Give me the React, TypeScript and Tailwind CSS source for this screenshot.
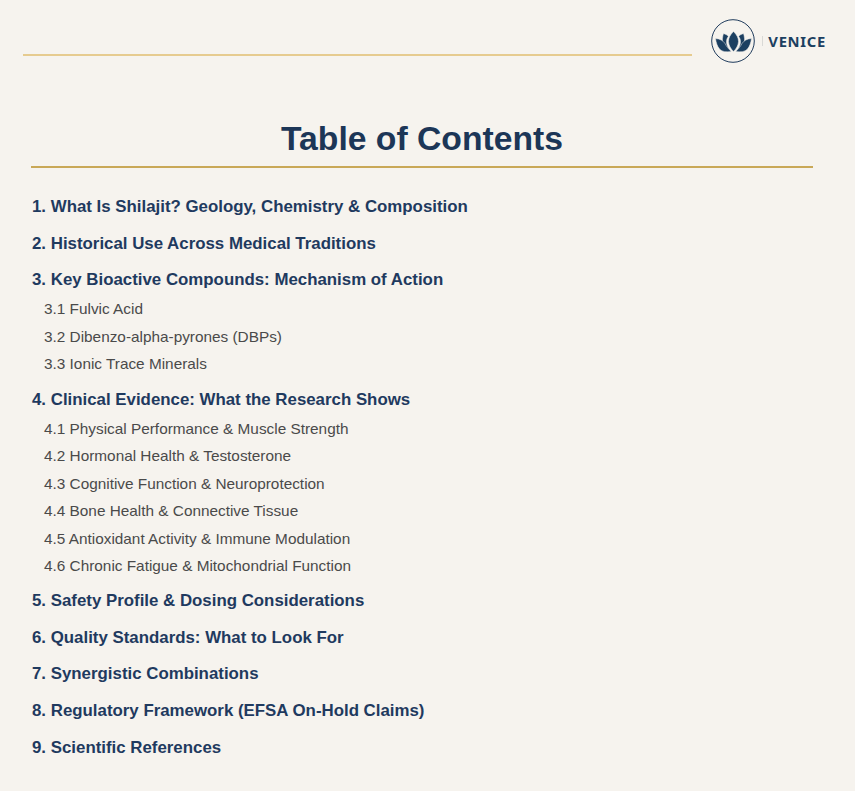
const sections: { title: string; subs?: string[]; gap: string }[] = [
  { title: '1. What Is Shilajit? Geology, Chemistry & Composition', gap: 'mb-[8px]' },
  { title: '2. Historical Use Across Medical Traditions', gap: 'mb-[8px]' },
  {
    title: '3. Key Bioactive Compounds: Mechanism of Action',
    subs: ['3.1 Fulvic Acid', '3.2 Dibenzo-alpha-pyrones (DBPs)', '3.3 Ionic Trace Minerals'],
    gap: 'mb-[8.6px]',
  },
  {
    title: '4. Clinical Evidence: What the Research Shows',
    subs: [
      '4.1 Physical Performance & Muscle Strength',
      '4.2 Hormonal Health & Testosterone',
      '4.3 Cognitive Function & Neuroprotection',
      '4.4 Bone Health & Connective Tissue',
      '4.5 Antioxidant Activity & Immune Modulation',
      '4.6 Chronic Fatigue & Mitochondrial Function',
    ],
    gap: 'mb-[7.4px]',
  },
  { title: '5. Safety Profile & Dosing Considerations', gap: 'mb-[8px]' },
  { title: '6. Quality Standards: What to Look For', gap: 'mb-[8px]' },
  { title: '7. Synergistic Combinations', gap: 'mb-[8px]' },
  { title: '8. Regulatory Framework (EFSA On-Hold Claims)', gap: 'mb-[8px]' },
  { title: '9. Scientific References', gap: 'mb-[8px]' },
];

function Petals() {
  return (
    <>
      <path d="M12.500 14.500c2.500.8 4 1.800 4.800 2.900-1.200 1.700-1.800 3.500-1.800 5.300 0 3 1.500 6 3.700 9-4-1.200-6.900-3.500-7.600-7.400-.5-3.200-.1-6.800.9-9.800z" />
      <path d="M4.500 19.500c4.500.3 7.500 2 9.500 5 1.500 2.900 3.400 5.500 6.300 8-5.300.9-9.300.2-11.800-2.500-2.300-2.800-3.400-6.500-4-10.500z" />
    </>
  );
}

function Logo() {
  return (
    <svg width="44" height="44" viewBox="0 0 44 44" className="shrink-0">
      <circle cx="22" cy="22" r="21.300" fill="#f6f3ee" stroke="#1f3b5c" strokeWidth="1" />
      <g fill="#1c3f60" stroke="#f6f3ee" strokeWidth="0.5">
        <Petals />
        <g transform="translate(45 0) scale(-1 1)">
          <Petals />
        </g>
        <path d="M22.500 12.500c3.500 3.500 5 6.500 5 10 0 3.500-2.500 7.500-5 10-2.500-2.500-5-6.500-5-10 0-3.500 1.500-6.500 5-10z" />
      </g>
    </svg>
  );
}

export default function App() {
  return (
    <div className="min-h-[791px] w-full overflow-hidden bg-[#f6f3ee] font-['Liberation_Sans',Arial,sans-serif]">
      <header className="flex h-[64px] items-end pl-[23px] pr-[29px]">
        <div className="mb-[8px] h-[2px] flex-1 bg-[#e6cb8f]" />
        <div className="ml-[19px] flex items-center pb-[1px]">
          <Logo />
          <div className="ml-[7px] mr-[5px] h-[10px] w-px bg-[#d9d9d6]" />
          <span className="pt-[1px] font-['Noto_Sans',sans-serif] text-[14.8px] font-bold tracking-[0.7px] text-[#1c3f60]">VENICE</span>
        </div>
      </header>

      <main className="pl-[31px] pr-[42px]">
        <h1 className="mt-[54px] text-center text-[33.7px] font-bold leading-[40px] text-[#1c3657]">Table of Contents</h1>
        <div className="mt-[8px] h-[2px] bg-[#c9a857]" />
        <ul className="mt-[25px] pl-px">
          {sections.map((s) => (
            <li key={s.title} className={s.gap}>
              <p className="text-[16.85px] font-bold leading-[28.7px] text-[#1f3a5f]">{s.title}</p>
              {s.subs && (
                <ul className="pl-[12px]">
                  {s.subs.map((sub) => (
                    <li key={sub} className="text-[15.35px] leading-[27.45px] text-[#4a4a4a]">{sub}</li>
                  ))}
                </ul>
              )}
            </li>
          ))}
        </ul>
      </main>
    </div>
  );
}
